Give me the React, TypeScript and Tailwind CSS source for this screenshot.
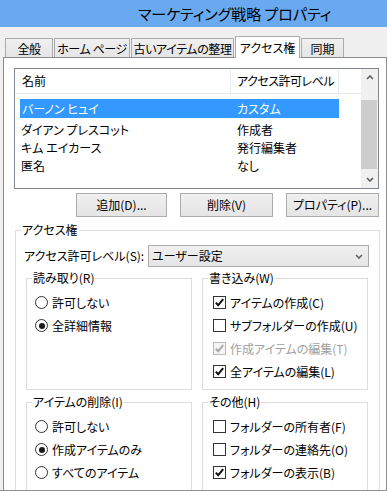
import React from "react";

const tabs = [
  { label: "全般", w: "w-[48px]" },
  { label: "ホーム ページ", w: "w-[76px]" },
  { label: "古いアイテムの整理", w: "w-[103px]" },
];

const users = [
  { name: "ダイアン プレスコット", level: "作成者" },
  { name: "キム エイカース", level: "発行編集者" },
  { name: "匿名", level: "なし" },
];

function Chevron({ up }: { up?: boolean }) {
  return (
    <svg width="8" height="5" viewBox="0 0 8 5">
      <path
        d={up ? "M1 4 L4 1 L7 4" : "M1 1 L4 4 L7 1"}
        fill="none"
        stroke="#606060"
        strokeWidth="1.6"
      />
    </svg>
  );
}

function Radio({ on }: { on?: boolean }) {
  return (
    <span className="flex h-[13px] w-[13px] items-center justify-center rounded-full border border-[#333333] bg-white">
      {on && <span className="h-[6px] w-[6px] rounded-full bg-[#1a1a1a]" />}
    </span>
  );
}

function Check({ on, disabled }: { on?: boolean; disabled?: boolean }) {
  return (
    <span
      className={
        disabled
          ? "flex h-[13px] w-[13px] items-center justify-center border border-[#bcbcbc] bg-[#f4f4f4]"
          : "flex h-[13px] w-[13px] items-center justify-center border border-[#333333] bg-white"
      }
    >
      {on && (
        <svg width="11" height="11" viewBox="0 0 11 11">
          <path
            d="M1.8 5.6 L4.2 8.2 L9.2 2.2"
            fill="none"
            stroke={disabled ? "#a8a8a8" : "#111111"}
            strokeWidth="2"
          />
        </svg>
      )}
    </span>
  );
}

function Group({
  title,
  h,
  children,
}: {
  title: string;
  h: string;
  children: React.ReactNode;
}) {
  return (
    <fieldset className={`w-[166px] border border-[#dcdcdc] ${h}`}>
      <legend className="ml-[5px] px-[1px] leading-[16px]">{title}</legend>
      <div className="pt-[5px]">{children}</div>
    </fieldset>
  );
}

function Option({
  children,
  radio,
  on,
  disabled,
}: {
  children: React.ReactNode;
  radio?: boolean;
  on?: boolean;
  disabled?: boolean;
}) {
  return (
    <div
      className={
        radio
          ? "flex h-[23px] items-center gap-[4px] pl-[8px]"
          : "flex h-[23px] items-center gap-[4px] pl-[10px]"
      }
    >
      {radio ? <Radio on={on} /> : <Check on={on} disabled={disabled} />}
      <span className={disabled ? "text-[#a0a0a0]" : ""}>{children}</span>
    </div>
  );
}

export default function App() {
  return (
    <div className="h-[491px] w-[387px] overflow-hidden whitespace-nowrap border-b border-[#8e8f8f] bg-[#f0f0f0] font-['Noto_Sans_CJK_JP',sans-serif] text-[12px] leading-[16px] text-black [font-feature-settings:'palt']">
      <div className="flex h-[27px] items-center bg-[#69a9f0] pl-[138px] text-[15px]">
        マーケティング戦略 プロパティ
      </div>

      <div className="flex h-[30px] items-end gap-[1px] pl-[5px]">
        {tabs.map((t) => (
          <div
            key={t.label}
            className={`flex h-[19px] items-center justify-center overflow-hidden border border-b-0 border-[#acacac] bg-gradient-to-b from-[#f0f0f0] to-[#e5e5e5] pt-[1px] tracking-[-0.4px] ${t.w}`}
          >
            {t.label}
          </div>
        ))}
        <div className="relative z-10 -mb-px flex h-[22px] w-[65px] items-center justify-center border border-b-0 border-[#acacac] bg-white">
          アクセス権
        </div>
        <div className="flex h-[19px] w-[43px] items-center justify-center border border-b-0 border-[#acacac] bg-gradient-to-b from-[#f0f0f0] to-[#e5e5e5] pt-[1px]">
          同期
        </div>
      </div>

      <div className="ml-[3px] h-[460px] w-[384px] border border-[#898c95] bg-white pl-[10px] pt-[10px]">
        <div className="flex h-[121px] w-[365px] border border-[#828790]">
          <div className="flex-1">
            <div className="flex h-[25px] border-b border-[#e3ebf5]">
              <div className="flex w-[216px] items-center border-r border-[#e3ebf5] pl-[7px]">
                名前
              </div>
              <div className="flex w-[108px] items-center overflow-hidden border-r border-[#e3ebf5] pl-[6px] tracking-[-0.5px]">
                アクセス許可レベル
              </div>
            </div>
            <div className="pt-[5px]">
              <div className="ml-[5px] flex h-[19px] w-[319px] items-center bg-[#3399ff] text-white">
                <span className="w-[217px] pl-[2px]">バーノン ヒュイ</span>
                <span>カスタム</span>
              </div>
              <div className="mt-[3px]">
                {users.map((u) => (
                  <div key={u.name} className="ml-[5px] flex h-[18px] items-center">
                    <span className="w-[217px] pl-[1px]">{u.name}</span>
                    <span>{u.level}</span>
                  </div>
                ))}
              </div>
            </div>
          </div>
          <div className="flex w-[17px] flex-col bg-[#f0f0f0]">
            <div className="flex h-[17px] items-center justify-center">
              <Chevron up />
            </div>
            <div className="flex-1">
              <div className="mt-[14px] h-[69px] w-[16px] bg-[#cdcdcd]" />
            </div>
            <div className="flex h-[17px] items-center justify-center">
              <Chevron />
            </div>
          </div>
        </div>

        <div className="mt-[4px] flex w-[365px] justify-end gap-[13px]">
          <button className="h-[24px] w-[91px] border border-[#acacac] bg-gradient-to-b from-[#f0f0f0] to-[#e5e5e5]">
            追加(D)...
          </button>
          <button className="h-[24px] w-[93px] border border-[#acacac] bg-gradient-to-b from-[#f0f0f0] to-[#e5e5e5]">
            削除(V)
          </button>
          <button className="h-[24px] w-[93px] border border-[#acacac] bg-gradient-to-b from-[#f0f0f0] to-[#e5e5e5]">
            プロパティ(P)...
          </button>
        </div>

        <fieldset className="ml-[1px] mt-[5px] h-[300px] w-[365px] border border-[#dcdcdc]">
          <legend className="ml-[5px] px-[1px] leading-[16px]">アクセス権</legend>
          <div className="mt-[7px] flex h-[22px] items-center">
            <span className="w-[132px] pl-[8px]">アクセス許可レベル(S):</span>
            <div className="flex h-[22px] w-[221px] items-center justify-between border border-[#acacac] bg-gradient-to-b from-[#f0f0f0] to-[#e5e5e5] pl-[3px] pr-[5px]">
              <span>ユーザー設定</span>
              <Chevron />
            </div>
          </div>

          <div className="mt-[3px] flex gap-[10px] pl-[10px]">
            <Group title="読み取り(R)" h="h-[120px]">
              <Option radio>許可しない</Option>
              <Option radio on>
                全詳細情報
              </Option>
            </Group>
            <Group title="書き込み(W)" h="h-[120px]">
              <Option on>アイテムの作成(C)</Option>
              <Option>サブフォルダーの作成(U)</Option>
              <Option on disabled>
                作成アイテムの編集(T)
              </Option>
              <Option on>全アイテムの編集(L)</Option>
            </Group>
          </div>

          <div className="mt-[4px] flex gap-[10px] pl-[10px]">
            <Group title="アイテムの削除(I)" h="h-[110px]">
              <Option radio>許可しない</Option>
              <Option radio on>
                作成アイテムのみ
              </Option>
              <Option radio>すべてのアイテム</Option>
            </Group>
            <Group title="その他(H)" h="h-[110px]">
              <Option>フォルダーの所有者(F)</Option>
              <Option>フォルダーの連絡先(O)</Option>
              <Option on>フォルダーの表示(B)</Option>
            </Group>
          </div>
        </fieldset>
      </div>
    </div>
  );
}
